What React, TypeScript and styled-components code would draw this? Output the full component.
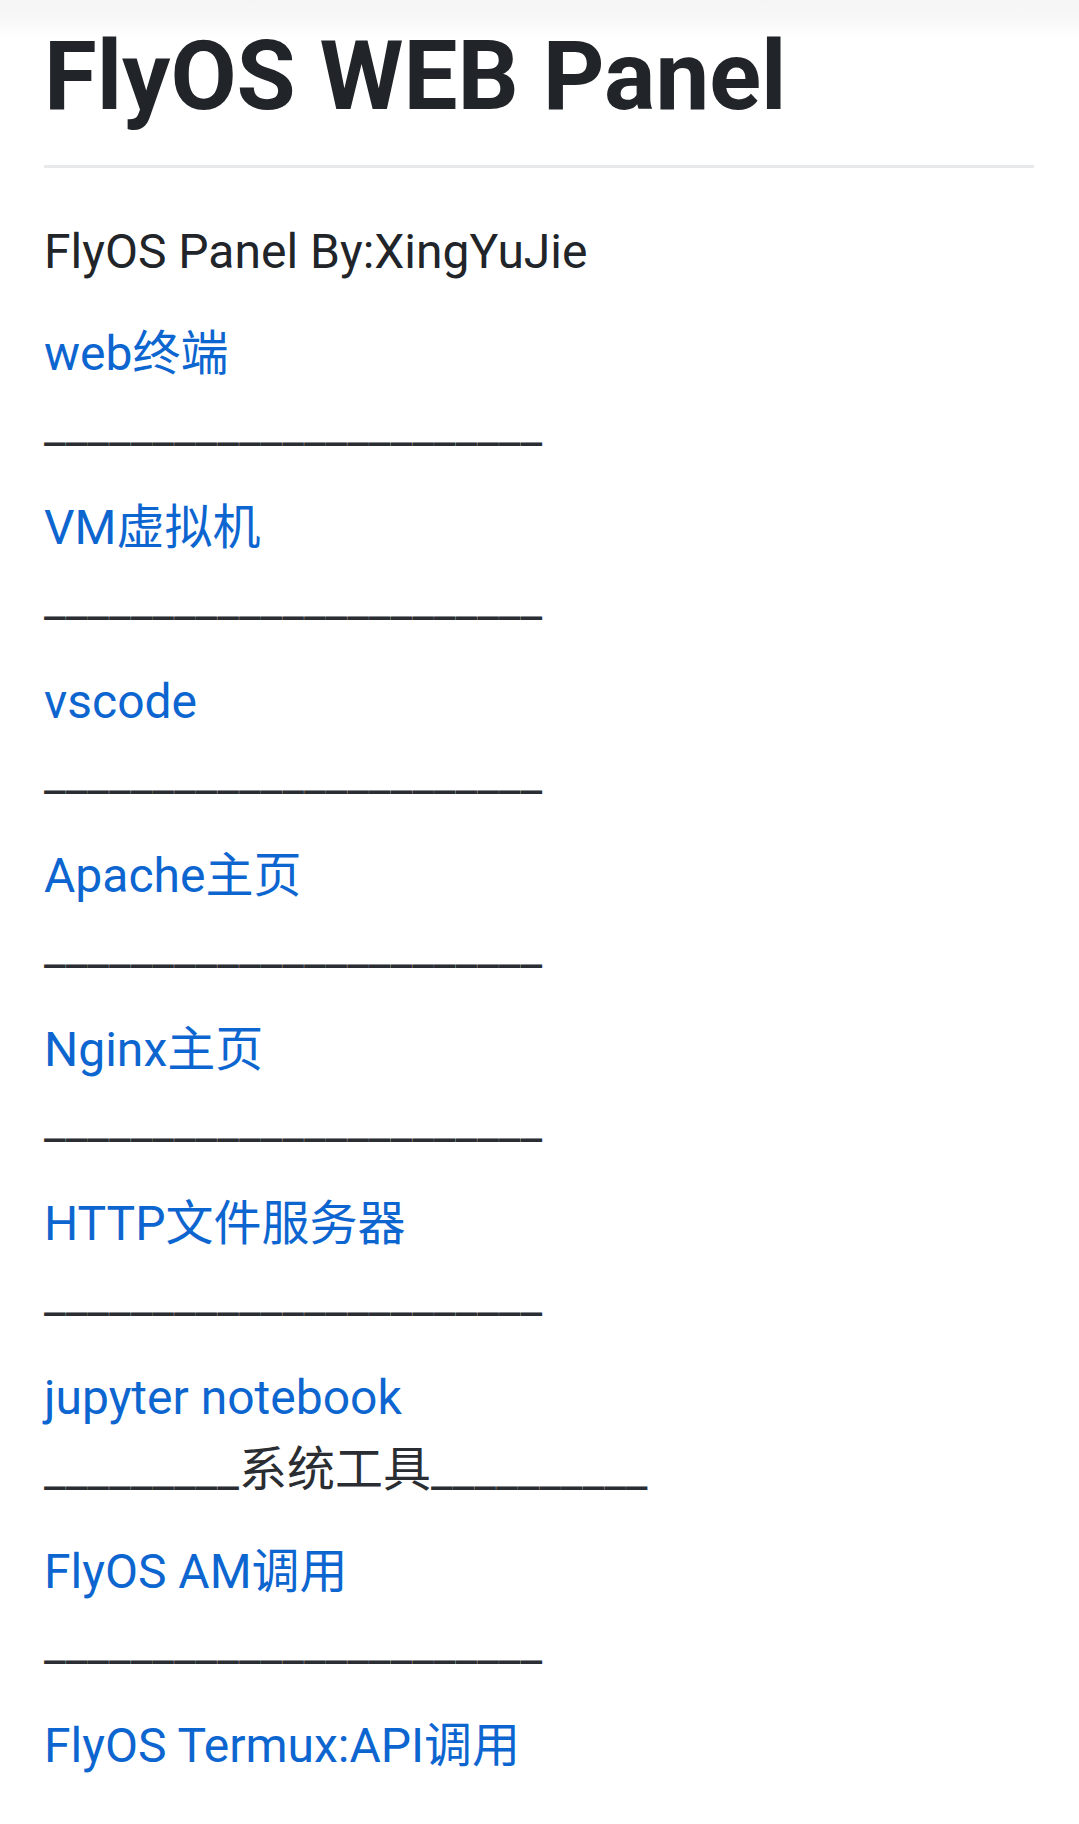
import React from "react";
import styled, { createGlobalStyle } from "styled-components";

const GlobalStyle = createGlobalStyle`
  html, body {
    margin: 0;
    padding: 0;
  }
  body {
    background: #ffffff linear-gradient(#f5f5f5 0px, #f8f8f8 22px, #fdfdfd 32px, #ffffff 38px) no-repeat;
    font-family: Roboto, "Noto Sans CJK SC", sans-serif;
    color: #212529;
  }
`;

const Page = styled.main`
  padding: 19px 45px 0 44px;
`;

const Title = styled.h1`
  margin: 0;
  font-family: Roboto, "Noto Sans CJK SC", sans-serif;
  font-size: 96px;
  line-height: 114px;
  font-weight: 700;
  color: #212529;
  white-space: nowrap;
`;

const Rule = styled.hr`
  margin: 32px 0 48px;
  border: 0;
  border-top: 3px solid #e8e9eb;
  height: 0;
`;

const Para = styled.p`
  margin: 0 0 30px;
  font-size: 48px;
  line-height: 72px;
  color: #212529;
  white-space: nowrap;
`;

const Link = styled.a`
  color: #0d66d0;
  text-decoration: none;
`;

const Separator = styled.span`
  color: #2a2d31;
`;

type Item = { label: string; href: string; sep?: string };

const LINE = "_".repeat(23);

const items: Item[] = [
  { label: "web终端", href: "#terminal", sep: LINE },
  { label: "VM虚拟机", href: "#vm", sep: LINE },
  { label: "vscode", href: "#vscode", sep: LINE },
  { label: "Apache主页", href: "#apache", sep: LINE },
  { label: "Nginx主页", href: "#nginx", sep: LINE },
  { label: "HTTP文件服务器", href: "#http", sep: LINE },
  {
    label: "jupyter notebook",
    href: "#jupyter",
    sep: "_".repeat(9) + "系统工具" + "_".repeat(10),
  },
  { label: "FlyOS AM调用", href: "#am", sep: LINE },
  { label: "FlyOS Termux:API调用", href: "#termux-api" },
];

export default function App() {
  return (
    <>
      <GlobalStyle />
      <Page>
        <Title>FlyOS WEB Panel</Title>
        <Rule />
        <Para>FlyOS Panel By:XingYuJie</Para>
        {items.map((item) => (
          <Para key={item.href}>
            <Link href={item.href}>{item.label}</Link>
            {item.sep && (
              <>
                <br />
                <Separator>{item.sep}</Separator>
              </>
            )}
          </Para>
        ))}
      </Page>
    </>
  );
}
